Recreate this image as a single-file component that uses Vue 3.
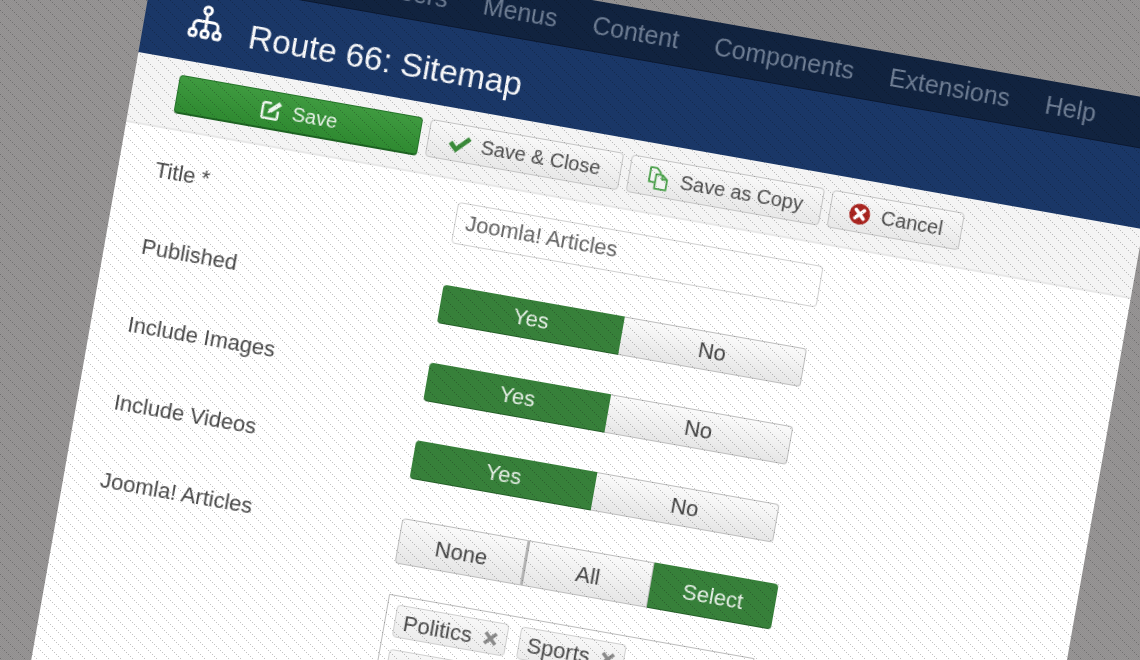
<script setup>
const navItems = ['System', 'Users', 'Menus', 'Content', 'Components', 'Extensions', 'Help']
const fields = [
  { label: 'Published' },
  { label: 'Include Images' },
  { label: 'Include Videos' }
]
const tags = ['Politics', 'Sports', 'Entertainment']
</script>

<template>
  <div class="stage">
    <div class="panel">
      <nav class="nav">
        <span v-for="item in navItems" :key="item">{{ item }}</span>
      </nav>
      <header class="head">
        <svg class="sitemap" viewBox="0 0 34 34" fill="none" stroke="#fff" stroke-width="2.8">
          <circle cx="17" cy="6" r="3.6" />
          <path d="M17 10v6M5.5 25v-4.500a4 4 0 0 1 4-4h15a4 4 0 0 1 4 4V25M17 16v9" />
          <rect x="2.200" y="25" width="6.600" height="6.500" rx="2.500" />
          <rect x="13.700" y="25" width="6.600" height="6.500" rx="2.500" />
          <rect x="25.200" y="25" width="6.600" height="6.500" rx="2.500" />
        </svg>
        <h1>Route 66: Sitemap</h1>
      </header>
      <div class="toolbar">
        <button class="btn primary">
          <svg class="ico" viewBox="0 0 22 22" fill="none" stroke="#eef6ee" stroke-width="2.400">
            <path d="M11 4H5a2 2 0 0 0-2 2v11a2 2 0 0 0 2 2h11a2 2 0 0 0 2-2v-6" />
            <path d="M8 14l1-4 9-8 3 3-9 8z" fill="#eef6ee" stroke="none" />
          </svg>
          Save
        </button>
        <button class="btn w-194">
          <svg class="ico" viewBox="0 0 22 22" fill="none" stroke="#3a8a3a" stroke-width="4.400">
            <path d="M2 11l6 6L20 5" />
          </svg>
          Save &amp; Close
        </button>
        <button class="btn w-194">
          <svg class="ico" viewBox="0 0 22 22" fill="none" stroke="#48a048" stroke-width="1.700" stroke-linejoin="round">
            <path d="M2 1h6l4 4v10H2z" fill="#f3f3f3" />
            <path d="M8 7h6l5 4v10H8z" fill="#f3f3f3" />
            <path d="M14 7v4h5" />
          </svg>
          Save as Copy
        </button>
        <button class="btn w-133">
          <svg class="ico" viewBox="0 0 22 22">
            <circle cx="11" cy="11" r="10" fill="#a92520" />
            <path d="M7 7l8 8M15 7l-8 8" stroke="#fff" stroke-width="3.400" stroke-linecap="round" />
          </svg>
          Cancel
        </button>
      </div>
      <form class="form" @submit.prevent>
        <label class="lbl first">Title *</label>
        <div class="input">Joomla! Articles</div>

        <template v-for="f in fields" :key="f.label">
          <label class="lbl">{{ f.label }}</label>
          <div class="group">
            <span class="opt on">Yes</span>
            <span class="opt">No</span>
          </div>
        </template>

        <label class="lbl">Joomla! Articles</label>
        <div class="group tri">
          <span class="opt">None</span>
          <span class="opt">All</span>
          <span class="opt on">Select</span>
        </div>

        <div class="tagbox">
          <span v-for="t in tags" :key="t" class="tag">
            {{ t }}
            <svg viewBox="0 0 15 15" class="x"><path d="M2 2l11 11M13 2L2 13" stroke="#8a8a8a" stroke-width="3.600" /></svg>
          </span>
        </div>
      </form>
    </div>
    <svg class="hatch" width="1140" height="660" shape-rendering="crispEdges">
      <defs>
        <pattern id="dots" width="12" height="12" patternUnits="userSpaceOnUse">
          <rect x="2" y="0" width="1" height="1" />
          <rect x="4" y="2" width="1" height="1" />
          <rect x="6" y="4" width="1" height="1" />
          <rect x="8" y="6" width="1" height="1" />
          <rect x="10" y="8" width="1" height="1" />
          <rect x="0" y="10" width="1" height="1" />
        </pattern>
      </defs>
      <rect width="1140" height="660" fill="url(#dots)" />
    </svg>
  </div>
</template>

<style>
html, body { margin: 0; background: #949292; }
</style>

<style scoped>
.stage {
  position: relative;
  width: 1140px;
  height: 660px;
  overflow: hidden;
  background: repeating-conic-gradient(#979595 0 25%, #918f8f 0 50%) 0 0 / 2px 2px;
  font-family: "Liberation Sans", Arial, sans-serif;
}
.panel {
  width: 1020px;
  height: 1000px;
  background: #fff;
  transform: translate(161px, -76px) rotate(10deg);
  transform-origin: 0 0;
  filter: blur(0.35px);
  color: #4a4a4a;
}
.nav {
  height: 51px;
  box-sizing: border-box;
  padding: 0 0 2px 111px;
  background: #11233f;
  border-bottom: 1px solid #0b1830;
  display: flex;
  align-items: center;
  gap: 36px;
  font-size: 25px;
  color: #6f7e94;
}
.head {
  height: 79px;
  background: #1a3767;
  display: flex;
  align-items: center;
  padding-left: 44px;
  box-sizing: border-box;
}
.sitemap { width: 36px; height: 36px; margin-top: -4px; }
.head h1 {
  margin: 10px 0 0 26px;
  font-size: 33.500px;
  font-weight: 400;
  color: #f6f7f9;
}
.toolbar {
  height: 71px;
  box-sizing: border-box;
  padding: 15px 0 0 45px;
  background: #f4f4f4;
  border-bottom: 2px solid #e8e8e8;
  display: flex;
  align-items: flex-start;
  gap: 8px;
}
.btn {
  height: 38px;
  box-sizing: border-box;
  border: 1.500px solid #c4c4c4;
  border-radius: 4px;
  background: linear-gradient(#f8f8f8, #e8e8e8);
  display: flex;
  align-items: center;
  justify-content: center;
  gap: 10px;
  padding: 0;
  font: 20px "Liberation Sans", Arial, sans-serif;
  color: #4c4c4c;
}
.primary {
  width: 247px;
  height: 39px;
  background: linear-gradient(#3f9a40, #2f8a31);
  border: 1px solid #25762a;
  border-bottom: 2px solid #1d6322;
  color: #e9f3e9;
}
.w-194 { width: 196px; }
.w-133 { width: 134px; }
.ico { width: 23px; height: 23px; flex: none; }
.form {
  display: grid;
  grid-template-columns: 304px 369px;
  row-gap: 40px;
  padding: 21px 0 0 37px;
  align-items: start;
}
.lbl {
  font-size: 22px;
  line-height: 24px;
  padding-top: 3px;
  color: #4a4a4a;
}
.lbl.first { padding-top: 9px; }
.input {
  height: 42px;
  width: 371px;
  box-sizing: border-box;
  border: 1.500px solid #d0d0d0;
  border-radius: 4px;
  background: #fff;
  margin-bottom: 2px;
  padding: 6px 10px;
  font-size: 22px;
  line-height: 26px;
  color: #666;
}
.group {
  display: flex;
  height: 39px;
  width: 369px;
  font-size: 22px;
}
.opt {
  flex: 1;
  display: flex;
  align-items: center;
  justify-content: center;
  box-sizing: border-box;
  border: 1.500px solid #bdbdbd;
  border-left: 0;
  background: linear-gradient(#fafafa, #e6e6e6);
  color: #444;
}
.opt:first-child { border-left: 1.500px solid #bdbdbd; border-radius: 4px 0 0 4px; }
.opt:last-child { border-radius: 0 4px 4px 0; }
.opt.on {
  background: #37803a;
  border: 0;
  border-bottom: 1.500px solid #245f28;
  color: #e7f0e7;
}
.tri { width: 382px; height: 46px; }
.tri .opt { padding-top: 3px; }
.tri .opt:nth-child(2) { border-left: 2px solid #b0b0b0; }
.tagbox {
  grid-column: 2;
  margin-top: -9px;
  width: 371px;
  box-sizing: border-box;
  border: 1.500px solid #bcbcbc;
  padding: 8px 9px;
  display: flex;
  flex-wrap: wrap;
  gap: 12px 12px;
}
.tag {
  height: 33px;
  box-sizing: border-box;
  border: 1.500px solid #cfcfcf;
  border-radius: 4px;
  background: linear-gradient(#f7f7f7, #ececec);
  padding: 2px 8px 0;
  display: flex;
  align-items: center;
  gap: 11px;
  font-size: 22px;
  color: #4a4a4a;
}
.x { width: 15px; height: 15px; }
.hatch {
  position: absolute;
  inset: 0;
  pointer-events: none;
  fill: rgba(0, 0, 0, 0.24);
}
</style>
